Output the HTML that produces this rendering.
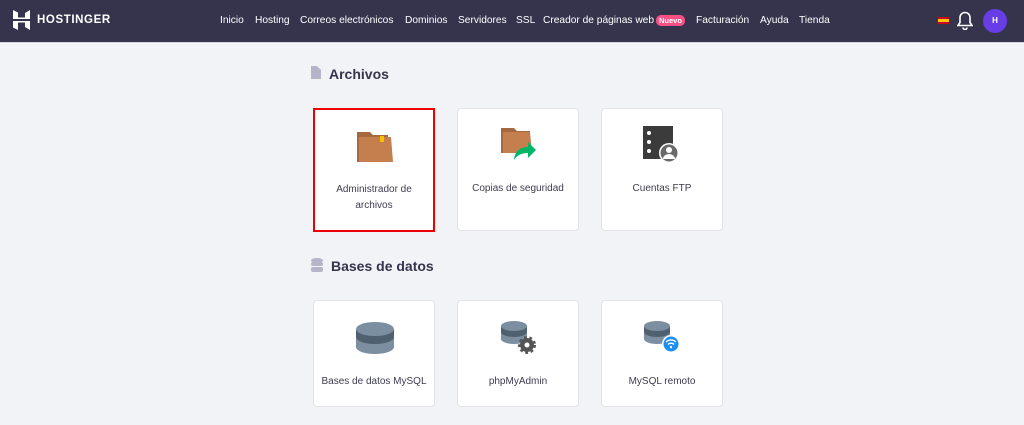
<!DOCTYPE html>
<html><head><meta charset="utf-8"><style>
*{margin:0;padding:0;box-sizing:border-box}
body{width:1024px;height:425px;background:#f2f3f6;font-family:"Liberation Sans",sans-serif;position:relative;overflow:hidden}
.hdr{position:absolute;left:0;top:0;width:1024px;height:43px;background:#36344d;border-bottom:1px solid #d5d4de}
.logo{position:absolute;left:37px;top:14px;color:#fff;font-weight:bold;font-size:11.5px;letter-spacing:0.6px}
.nav span{position:absolute;top:15px;color:#fff;font-size:10.2px;white-space:nowrap}
.nav .badge{background:#fc5185;border-radius:5px;font-size:7.5px;padding:1px 3px;font-weight:bold;top:15px}
.h{position:absolute;font-size:14px;font-weight:bold;color:#36344d}
.card{position:absolute;background:#fff;border-radius:4px;border:1px solid #e3e3ea}
.card .t{position:absolute;left:0;right:0;text-align:center;font-size:10px;color:#3d3c4d;line-height:16px}
.card svg{position:absolute}
</style></head><body>
<div class="hdr">
<svg style="position:absolute;left:13px;top:10px" width="17" height="20" viewBox="0 0 17 20"><path d="M0 0l5 2.5v5l7 0V3l5-3v9H0z M0 11h17v9l-5-3v-4.5H5V20l-5-2.5z" fill="#fff"/></svg>
<div class="logo">HOSTINGER</div>
<div class="nav">
<span style="left:220px">Inicio</span><span style="left:255px">Hosting</span><span style="left:300px">Correos electrónicos</span><span style="left:405px">Dominios</span><span style="left:458px">Servidores</span><span style="left:516px">SSL</span><span style="left:543px">Creador de páginas web</span><span class="badge" style="left:656px">Nuevo</span><span style="left:696px">Facturación</span><span style="left:760px">Ayuda</span><span style="left:799px">Tienda</span>
</div>
<div style="position:absolute;left:938px;top:17px;width:11px;height:7px;background:#c60b1e"><div style="margin-top:2px;height:3px;background:#ffc400"></div></div>
<svg style="position:absolute;left:957px;top:11px" width="16" height="19" viewBox="0 0 16 19"><path d="M8 1.5a5 5 0 0 0-5 5v5l-2 3h14l-2-3v-5a5 5 0 0 0-5-5z" fill="none" stroke="#fff" stroke-width="1.6"/><path d="M6 16.5a2 2 0 0 0 4 0" fill="none" stroke="#fff" stroke-width="1.6"/></svg>
<div style="position:absolute;left:983px;top:9px;width:24px;height:24px;border-radius:50%;background:#673de6;color:#fff;font-size:8px;font-weight:bold;text-align:center;line-height:24px">H</div>
</div>

<svg style="position:absolute;left:311px;top:66px" width="10" height="13"><path d="M0 0h6l4 4v9H0z" fill="#b6b4c8"/></svg>
<div class="h" style="left:329px;top:66px">Archivos</div>
<svg style="position:absolute;left:311px;top:258px" width="12" height="14"><ellipse cx="6" cy="2.5" rx="6" ry="2.5" fill="#b6b4c8"/><rect x="0" y="4" width="12" height="4" rx="2" fill="#b6b4c8"/><rect x="0" y="9" width="12" height="5" rx="2" fill="#b6b4c8"/></svg>
<div class="h" style="left:331px;top:258px">Bases de datos</div>

<div class="card" style="left:313px;top:108px;width:122px;height:124px;border:2px solid #e00;border-radius:0">
<svg style="left:41px;top:20px" width="38" height="34"><path d="M1 2h13l3 3h15v27H1z" fill="#a6693f"/><path d="M3 7h32l2 25H3z" fill="#c57e4d"/><rect x="24" y="6" width="4" height="6" fill="#f2c200"/></svg>
<div class="t" style="top:72px">Administrador de<br>archivos</div></div>
<div class="card" style="left:457px;top:108px;width:122px;height:123px">
<svg style="left:42px;top:17px" width="38" height="36"><path d="M1 2h13l3 3h13v22H1z" fill="#a6693f"/><path d="M3 6h27l2 21H3z" fill="#c57e4d"/><path d="M14 34c1-9 6-13 14-13v-5l8 8-8 8v-5c-6 0-11 2-14 7z" fill="#00b567"/></svg>
<div class="t" style="top:72px">Copias de seguridad</div></div>
<div class="card" style="left:601px;top:108px;width:122px;height:123px">
<svg style="left:40px;top:17px" width="38" height="38"><rect x="1" y="0" width="30" height="33" fill="#3b3b3b"/><circle cx="7" cy="7" r="2" fill="#fff"/><circle cx="7" cy="16" r="2" fill="#fff"/><circle cx="7" cy="25" r="2" fill="#fff"/><circle cx="27" cy="27" r="10" fill="#fff"/><circle cx="27" cy="27" r="8.5" fill="#6a6a6a"/><circle cx="27" cy="24" r="3" fill="#fff"/><path d="M21 33a6 5 0 0 1 12 0" fill="#fff"/></svg>
<div class="t" style="top:72px">Cuentas FTP</div></div>

<div class="card" style="left:313px;top:300px;width:122px;height:107px">
<svg style="left:41px;top:20px" width="40" height="34"><ellipse cx="20" cy="26" rx="19" ry="7" fill="#7c8fa1"/><rect x="1" y="16" width="38" height="10" fill="#7c8fa1"/><ellipse cx="20" cy="16" rx="19" ry="7" fill="#4f6071"/><rect x="1" y="8" width="38" height="8" fill="#4f6071"/><ellipse cx="20" cy="8" rx="19" ry="7" fill="#7c8fa1"/></svg>
<div class="t" style="top:73px">Bases de datos MySQL</div></div>
<div class="card" style="left:457px;top:300px;width:122px;height:107px">
<svg style="left:42px;top:19px" width="38" height="36"><ellipse cx="14" cy="19" rx="13" ry="5" fill="#7c8fa1"/><rect x="1" y="12" width="26" height="7" fill="#7c8fa1"/><ellipse cx="14" cy="12" rx="13" ry="5" fill="#4f6071"/><rect x="1" y="6" width="26" height="6" fill="#4f6071"/><ellipse cx="14" cy="6" rx="13" ry="5" fill="#7c8fa1"/><circle cx="27" cy="25" r="7" fill="#555" stroke="#555" stroke-width="4" stroke-dasharray="2.5 2.5"/><circle cx="27" cy="25" r="2.5" fill="#fff"/></svg>
<div class="t" style="top:73px">phpMyAdmin</div></div>
<div class="card" style="left:601px;top:300px;width:122px;height:107px">
<svg style="left:41px;top:19px" width="40" height="36"><ellipse cx="14" cy="19" rx="13" ry="5" fill="#7c8fa1"/><rect x="1" y="12" width="26" height="7" fill="#7c8fa1"/><ellipse cx="14" cy="12" rx="13" ry="5" fill="#4f6071"/><rect x="1" y="6" width="26" height="6" fill="#4f6071"/><ellipse cx="14" cy="6" rx="13" ry="5" fill="#7c8fa1"/><circle cx="28" cy="24" r="9" fill="#fff"/><circle cx="28" cy="24" r="7.5" fill="#1b8ef2"/><path d="M23 22a7 7 0 0 1 10 0M25 24.5a4 4 0 0 1 6 0" fill="none" stroke="#fff" stroke-width="1.4"/><circle cx="28" cy="27" r="1.2" fill="#fff"/></svg>
<div class="t" style="top:73px">MySQL remoto</div></div>
</body></html>
